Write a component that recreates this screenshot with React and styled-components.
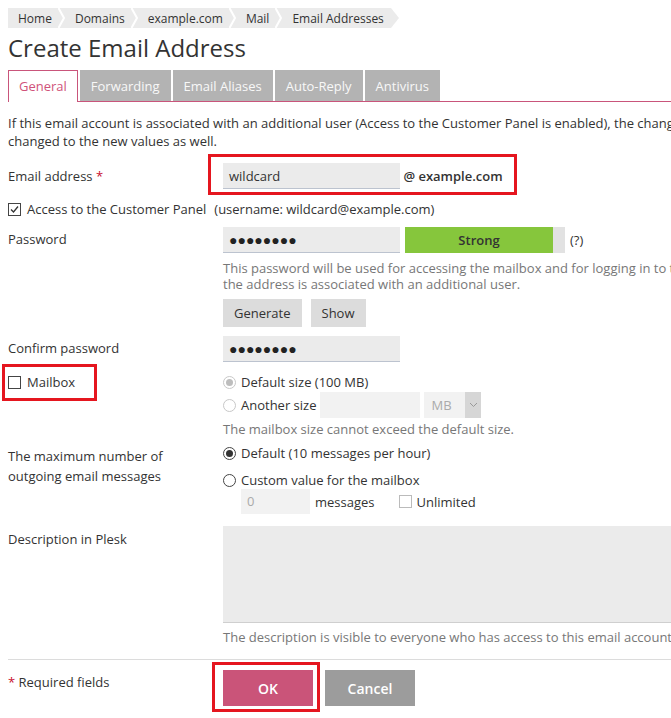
import React from 'react';
import styled, { createGlobalStyle } from 'styled-components';

const Global = createGlobalStyle`
  html, body { margin: 0; padding: 0; overflow: hidden; background: #fff; }
  body {
    font-family: "Open Sans", "Liberation Sans", Arial, sans-serif;
    font-size: 13px;
    color: #333;
  }
`;

const PINK = '#c9557b';
const MARK = '#e5161f';

const Page = styled.div`
  width: 1000px;
  padding: 8px;
`;

/* breadcrumbs */
const Crumbs = styled.nav`
  display: flex;
  height: 20px;
  font-size: 12px;
  line-height: 21px;
`;
const Crumb = styled.span`
  background: #ebebeb;
  color: #333;
  padding: 0 ${(p) => (p.$last ? 7 : 6)}px 0 10px;
  white-space: nowrap;
`;
const CrumbSep = () => (
  <svg width="7" height="20" viewBox="0 0 7 20" style={{ display: 'block' }}>
    <rect width="7" height="20" fill="#ebebeb" />
    <polyline points="0.5,0 6,10 0.5,20" fill="none" stroke="#fff" strokeWidth="2" />
  </svg>
);
const CrumbTip = () => (
  <svg width="8" height="20" viewBox="0 0 8 20" style={{ display: 'block' }}>
    <polygon points="0,0 8,10 0,20" fill="#ebebeb" />
  </svg>
);

const Title = styled.h1`
  margin: 5px 0 7px;
  font-size: 24px;
  font-weight: 400;
  line-height: 30px;
  color: #333;
`;

/* tabs */
const TabBar = styled.div`
  display: flex;
  gap: 2px;
  height: 31px;
  border-bottom: 1px solid ${PINK};
`;
const Tab = styled.div`
  box-sizing: border-box;
  height: ${(p) => (p.$active ? 32 : 31)}px;
  padding: 0 ${(p) => (p.$active ? 10 : 11)}px;
  line-height: ${(p) => (p.$active ? 31 : 32)}px;
  font-size: 13px;
  background: ${(p) => (p.$active ? '#fff' : '#b3b3b3')};
  color: ${(p) => (p.$active ? '#d0527a' : '#f8f8f8')};
  border: ${(p) => (p.$active ? `1px solid ${PINK}` : 'none')};
  border-bottom: none;
  white-space: nowrap;
`;

const Intro = styled.p`
  margin: 12px 0 0;
  line-height: 18px;
  white-space: nowrap;
`;

/* form layout */
const Row = styled.div`
  display: grid;
  grid-template-columns: 215px 1fr;
  margin-top: ${(p) => p.$mt || 0}px;
`;
const Label = styled.div`
  padding-top: ${(p) => (p.$pt ?? 4)}px;
  line-height: ${(p) => p.$lh || 18}px;
  color: #333;
`;
const Req = styled.span`
  color: #c8102e;
`;
const Field = styled.div`
  display: flex;
  flex-direction: column;
  align-items: flex-start;
`;
const Line = styled.div`
  display: flex;
  align-items: center;
  gap: ${(p) => p.$gap ?? 5}px;
  min-height: 18px;
  margin-top: ${(p) => p.$mt || 0}px;
  margin-left: ${(p) => p.$ml || 0}px;
`;
const FullLine = styled.div`
  display: flex;
  align-items: center;
  height: 18px;
  margin-top: ${(p) => p.$mt || 0}px;
`;

const Mark = styled.div`
  display: inline-flex;
  align-items: center;
  border: 3px solid ${MARK};
  padding: ${(p) => p.$pad};
  margin: ${(p) => p.$mar};
`;

const TextBox = styled.div`
  box-sizing: border-box;
  width: ${(p) => p.$w}px;
  height: ${(p) => p.$h || 26}px;
  padding: 0 ${(p) => p.$pl ?? 6}px;
  display: flex;
  align-items: center;
  background: ${(p) => (p.$disabled ? '#f2f2f2' : '#ebebeb')};
  border-bottom: 1px solid ${(p) => (p.$disabled ? 'transparent' : '#bcc3cf')};
  color: ${(p) => (p.$disabled ? '#aaa' : '#333')};
  font-size: 13px;
`;
const Dots = styled.span`
  font-size: 14px;
  font-weight: 700;
  color: #222;
`;
const Domain = styled.span`
  font-weight: 600;
  color: #333;
  white-space: nowrap;
`;

const Meter = styled.div`
  width: 160px;
  height: 26px;
  background: #e2e2e2;
  display: flex;
`;
const MeterFill = styled.div`
  width: ${(p) => p.$w}px;
  background: #86c63c;
  display: flex;
  align-items: center;
  justify-content: center;
  font-weight: 600;
  color: #333;
`;

const Hint = styled.div`
  color: #777;
  line-height: ${(p) => p.$lh || 16}px;
  margin-top: ${(p) => p.$mt || 0}px;
  white-space: nowrap;
`;

const Buttons = styled.div`
  display: flex;
  gap: ${(p) => p.$gap || 9}px;
  margin-top: ${(p) => p.$mt || 0}px;
`;
const GreyButton = styled.button`
  height: 28px;
  padding: 0 11px;
  border: none;
  background: #dcdcdc;
  color: #333;
  font: inherit;
  font-size: 13px;
`;
const ActionButton = styled.button`
  width: 90px;
  height: 36px;
  border: none;
  background: ${(p) => (p.$primary ? '#ca5479' : '#9c9c9c')};
  color: #fff;
  font-family: inherit;
  font-size: 14px;
  font-weight: 600;
`;

/* checkboxes & radios */
const Box = styled.span`
  box-sizing: border-box;
  width: 13px;
  height: 13px;
  border: 1px solid ${(p) => (p.$disabled ? '#bbb' : '#444')};
  background: #fff;
  display: inline-flex;
  align-items: center;
  justify-content: center;
  flex: none;
`;
const Check = ({ checked, disabled }) => (
  <Box $disabled={disabled}>
    {checked && (
      <svg width="9" height="9" viewBox="0 0 9 9">
        <polyline points="1,4.5 3.5,7 8,1.5" fill="none" stroke="#333" strokeWidth="1.3" />
      </svg>
    )}
  </Box>
);
const Circle = styled.span`
  box-sizing: border-box;
  width: 13px;
  height: 13px;
  border-radius: 50%;
  border: 1px solid ${(p) => (p.$disabled ? '#c8c8c8' : '#444')};
  background: #fff;
  display: inline-flex;
  align-items: center;
  justify-content: center;
  flex: none;
`;
const Dot = styled.span`
  width: 7px;
  height: 7px;
  border-radius: 50%;
  background: ${(p) => (p.$disabled ? '#bdbdbd' : '#333')};
`;
const Radio = ({ checked, disabled }) => (
  <Circle $disabled={disabled}>{checked && <Dot $disabled={disabled} />}</Circle>
);

const Select = styled.div`
  display: flex;
  height: 26px;
  background: #f2f2f2;
  color: #aaa;
`;
const SelectValue = styled.span`
  width: 41px;
  display: flex;
  align-items: center;
  padding-left: 7px;
  box-sizing: border-box;
`;
const SelectArrow = styled.span`
  width: 16px;
  background: #d6d6d6;
  display: flex;
  align-items: center;
  justify-content: center;
`;

const Spacer = styled.span`
  width: ${(p) => p.$w}px;
`;

const TextArea = styled.div`
  box-sizing: border-box;
  width: 640px;
  height: 97px;
  background: #ebebeb;
  border-bottom: 1px solid #cfcfcf;
`;

const Rule = styled.hr`
  margin: 13px 0 0;
  border: none;
  border-top: 1px solid #dcdcdc;
`;

const Footer = styled.div`
  display: grid;
  grid-template-columns: 215px 1fr;
  margin-top: 10px;
`;

export default function App() {
  const crumbs = ['Home', 'Domains', 'example.com', 'Mail', 'Email Addresses'];
  const tabs = ['General', 'Forwarding', 'Email Aliases', 'Auto-Reply', 'Antivirus'];
  return (
    <Page>
      <Global />
      <Crumbs>
        {crumbs.map((c, i) => (
          <React.Fragment key={c}>
            <Crumb $last={i === crumbs.length - 1}>{c}</Crumb>
            {i < crumbs.length - 1 ? <CrumbSep /> : <CrumbTip />}
          </React.Fragment>
        ))}
      </Crumbs>

      <Title>Create Email Address</Title>

      <TabBar>
        {tabs.map((t, i) => (
          <Tab key={t} $active={i === 0}>{t}</Tab>
        ))}
      </TabBar>

      <Intro>
        If this email account is associated with an additional user (Access to the Customer Panel is enabled), the changes to the email address and password will be
        <br />
        changed to the new values as well.
      </Intro>

      <Row $mt={13}>
        <Label>
          Email address <Req>*</Req>
        </Label>
        <Field>
          <Mark $pad="6px 11px 3px 12px" $mar="-9px -14px -6px -15px">
            <TextBox $w={177}>wildcard</TextBox>
            <Domain>&nbsp;@ example.com</Domain>
          </Mark>
        </Field>
      </Row>

      <FullLine $mt={11}>
        <Check checked />
        <span style={{ marginLeft: 6 }}>Access to the Customer Panel</span>
        <span style={{ marginLeft: 8 }}>(username: wildcard@example.com)</span>
      </FullLine>

      <Row $mt={9}>
        <Label $pt={3}>Password</Label>
        <Field>
          <Line>
            <TextBox $w={177}>
              <Dots>●●●●●●●●</Dots>
            </TextBox>
            <Meter>
              <MeterFill $w={148}>Strong</MeterFill>
            </Meter>
            <span>(?)</span>
          </Line>
          <Hint $mt={7}>
            This password will be used for accessing the mailbox and for logging in to the Customer Panel if
            <br />
            the address is associated with an additional user.
          </Hint>
          <Buttons $mt={7}>
            <GreyButton>Generate</GreyButton>
            <GreyButton>Show</GreyButton>
          </Buttons>
        </Field>
      </Row>

      <Row $mt={9}>
        <Label $pt={3}>Confirm password</Label>
        <Field>
          <TextBox $w={177}>
            <Dots>●●●●●●●●</Dots>
          </TextBox>
        </Field>
      </Row>

      <Row $mt={11}>
        <Field>
          <Mark $pad="6px 19px 7px 3px" $mar="-9px -22px -10px -6px">
            <Line $gap={6}>
              <Check />
              <span>Mailbox</span>
            </Line>
          </Mark>
        </Field>
        <Field>
          <Line>
            <Radio checked disabled />
            <span>Default size (100 MB)</span>
          </Line>
          <Line $gap={4} $mt={1}>
            <Radio disabled />
            <span style={{ marginLeft: 1 }}>Another size</span>
            <TextBox $w={100} $disabled />
            <Select>
              <SelectValue>MB</SelectValue>
              <SelectArrow>
                <svg width="9" height="6" viewBox="0 0 9 6">
                  <polyline points="1,1 4.5,4.5 8,1" fill="none" stroke="#999" strokeWidth="1" />
                </svg>
              </SelectArrow>
            </Select>
          </Line>
          <Hint $mt={2} $lh={18}>The mailbox size cannot exceed the default size.</Hint>
        </Field>
      </Row>

      <Row $mt={6}>
        <Label $pt={2} $lh={20}>
          The maximum number of
          <br />
          outgoing email messages
        </Label>
        <Field>
          <Line>
            <Radio checked />
            <span>Default (10 messages per hour)</span>
          </Line>
          <Line $mt={9}>
            <Radio />
            <span>Custom value for the mailbox</span>
          </Line>
          <Line $ml={18}>
            <TextBox $w={69} $h={25} $disabled>0</TextBox>
            <span>messages</span>
            <Spacer $w={14} />
            <Check disabled />
            <span>Unlimited</span>
          </Line>
        </Field>
      </Row>

      <Row $mt={12}>
        <Label>Description in Plesk</Label>
        <Field>
          <TextArea />
          <Hint $mt={5} $lh={18}>
            The description is visible to everyone who has access to this email account.
          </Hint>
        </Field>
      </Row>

      <Rule />

      <Footer>
        <Label $pt={3}>
          <Req>*</Req> Required fields
        </Label>
        <Buttons $gap={12}>
          <Mark $pad="5px 4px 3px 8px" $mar="-8px -7px -6px -11px">
            <ActionButton $primary>OK</ActionButton>
          </Mark>
          <ActionButton>Cancel</ActionButton>
        </Buttons>
      </Footer>
    </Page>
  );
}
